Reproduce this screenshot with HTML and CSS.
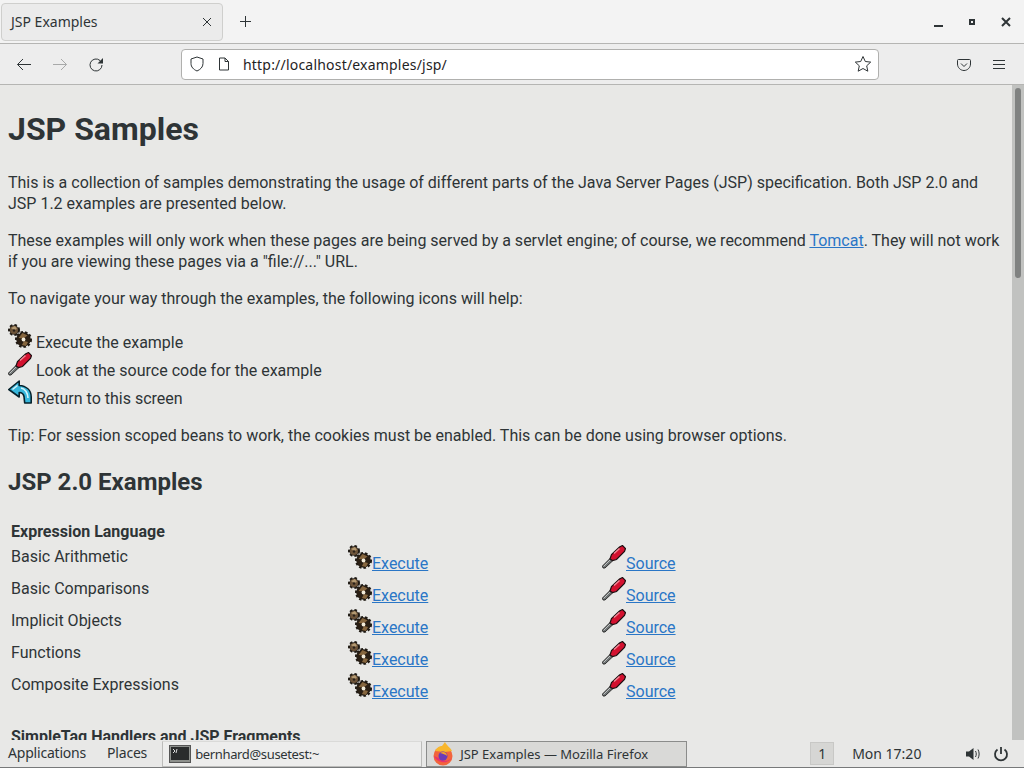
FILE: index.html
```html
<!DOCTYPE html>
<html lang="en">

<head>
    <meta charset="UTF-8">
    <title>JSP Examples</title>
    <link rel="stylesheet" href="styles.css">
</head>

<body>
    <svg class="icon-defs" width="0" height="0" aria-hidden="true">
        <defs>
            <symbol id="gears" viewBox="0 0 24 24">
                <g fill="#1f1a14" stroke="#1f1a14" stroke-width="2.600" stroke-dasharray="2.400 2">
                    <circle cx="6" cy="6" r="4.700"/>
                    <circle cx="15.500" cy="15.500" r="7.200"/>
                </g>
                <circle cx="6" cy="6" r="4" fill="#6d5439"/>
                <path d="M3 4l4-2 2 3-3 1z" fill="#b49a72"/>
                <circle cx="6" cy="6.500" r="1.200" fill="#2a2118"/>
                <circle cx="15.500" cy="15.500" r="6.800" fill="#2a1f14"/>
                <path d="M10.500 14l4-5 5 2.500-4 3zM14 21l2-4 4 1-2 4z" fill="#86663e"/>
                <circle cx="15.500" cy="15.500" r="1.900" fill="#f3ecda"/>
            </symbol>
            <symbol id="driver" viewBox="0 0 24 24">
                <path d="M1 23l-.5-2 8.500-8.500 2.500 2.500-8.500 8z" fill="#6f7474" stroke="#222" stroke-width=".9"/>
                <path d="M1.500 21.500l7-7" stroke="#c9cccc" stroke-width=".9" fill="none"/>
                <path d="M8 14l1.500-4.500 8-7.500 3-1.500 3 3-1 3-8 8-4 1z" fill="#d3112f" stroke="#1c1012" stroke-width="1.200"/>
                <path d="M12 8.500l5.500-5" stroke="#f58a98" stroke-width="1.400" fill="none"/>
            </symbol>
            <symbol id="back" viewBox="0 0 24 24">
                <path d="M.8 9.500l10.400-8.500v4.500c7 .5 12 4.500 12 11.500v6h-6.500l-.7-6.500c-.5-2.500-2.500-4-4.800-4v4.500z" fill="#37b7dc" stroke="#06222c" stroke-width="1.600" stroke-linejoin="round"/>
                <path d="M4.500 9.500l5-4M13 8c4 1 6.500 4 7 10" stroke="#d4f3fb" stroke-width="1.600" fill="none"/>
            </symbol>
        </defs>
    </svg>

    <header class="browser">
        <div class="tabbar">
            <div class="tab">
                <span class="tab-title">JSP Examples</span>
                <svg class="tab-close" width="10" height="10" viewBox="0 0 10 10"><path d="M1 1l8 8M9 1l-8 8"/></svg>
            </div>
            <svg class="new-tab" width="12" height="12" viewBox="0 0 12 12"><path d="M5.500 0v11M0 5.500h11"/></svg>
            <div class="window-buttons">
                <span class="win-min"></span>
                <span class="win-max"></span>
                <svg class="win-close" width="10" height="10" viewBox="0 0 10 10"><path d="M1 1l8 8M9 1l-8 8"/></svg>
            </div>
        </div>
        <div class="navbar">
            <svg class="nav-icon" width="16" height="16" viewBox="0 0 16 16"><path d="M15 7.500H1.500M7 2L1.500 7.500 7 13"/></svg>
            <svg class="nav-icon nav-off" width="16" height="16" viewBox="0 0 16 16"><path d="M1 7.500h13.500M9 2l5.500 5.500L9 13"/></svg>
            <svg class="nav-icon" width="16" height="16" viewBox="0 0 16 16"><path d="M14 8a6 6 0 1 1-2-4.500L14 5.500"/><path class="solid" d="M15 1v5.500H9.500z"/></svg>
            <div class="urlbar">
                <svg class="url-icon" width="16" height="16" viewBox="0 0 16 16"><path d="M8 1l6 2v4.500c0 3.500-2.500 6-6 7.500-3.500-1.500-6-4-6-7.500V3z"/></svg>
                <svg class="url-icon" width="14" height="16" viewBox="0 0 14 16"><path d="M2.500 2h5.500l3.500 3.500v8.500h-9zM8 2v3.500h3.500"/></svg>
                <span class="url-text">http://localhost/examples/jsp/</span>
                <svg class="url-star" width="18" height="18" viewBox="0 0 18 18"><path d="M9 1.500l2.300 5 5.400.6-4 3.700 1.100 5.400L9 13.500l-4.800 2.700 1.100-5.400-4-3.700 5.400-.6z"/></svg>
            </div>
            <svg class="nav-icon pocket" width="16" height="16" viewBox="0 0 16 16"><path d="M2.500 2.500h11a1 1 0 0 1 1 1v3.500c0 3.500-3 6.500-6.500 6.500s-6.500-3-6.500-6.500V3.500a1 1 0 0 1 1-1zM5 6.500l3 3 3-3"/></svg>
            <svg class="nav-icon menu" width="14" height="12" viewBox="0 0 14 12"><path d="M1 1.500h12M1 5.500h12M1 9.500h12"/></svg>
        </div>
    </header>

    <div class="viewport">
        <main class="page">
            <h1>JSP Samples</h1>
            <p>This is a collection of samples demonstrating the usage of different parts of the Java Server Pages (JSP) specification. Both JSP 2.0 and JSP 1.2 examples are presented below.</p>
            <p>These examples will only work when these pages are being served by a servlet engine; of course, we recommend <a href="#">Tomcat</a>. They will not work if you are viewing these pages via a "file://..." URL.</p>
            <p>To navigate your way through the examples, the following icons will help:</p>
            <div class="legend">
                <div><svg class="pic"><use href="#gears"/></svg> Execute the example</div>
                <div><svg class="pic"><use href="#driver"/></svg> Look at the source code for the example</div>
                <div><svg class="pic"><use href="#back"/></svg> Return to this screen</div>
            </div>
            <p>Tip: For session scoped beans to work, the cookies must be enabled. This can be done using browser options.</p>
            <h2>JSP 2.0 Examples</h2>
            <table class="samples">
                <colgroup>
                    <col class="col-name">
                    <col class="col-execute">
                    <col class="col-source">
                </colgroup>
                <tr><th colspan="3">Expression Language</th></tr>
                <tr>
                    <td>Basic Arithmetic</td>
                    <td><svg class="pic"><use href="#gears"/></svg><a href="#">Execute</a></td>
                    <td><svg class="pic"><use href="#driver"/></svg><a href="#">Source</a></td>
                </tr>
                <tr>
                    <td>Basic Comparisons</td>
                    <td><svg class="pic"><use href="#gears"/></svg><a href="#">Execute</a></td>
                    <td><svg class="pic"><use href="#driver"/></svg><a href="#">Source</a></td>
                </tr>
                <tr>
                    <td>Implicit Objects</td>
                    <td><svg class="pic"><use href="#gears"/></svg><a href="#">Execute</a></td>
                    <td><svg class="pic"><use href="#driver"/></svg><a href="#">Source</a></td>
                </tr>
                <tr>
                    <td>Functions</td>
                    <td><svg class="pic"><use href="#gears"/></svg><a href="#">Execute</a></td>
                    <td><svg class="pic"><use href="#driver"/></svg><a href="#">Source</a></td>
                </tr>
                <tr>
                    <td>Composite Expressions</td>
                    <td><svg class="pic"><use href="#gears"/></svg><a href="#">Execute</a></td>
                    <td><svg class="pic"><use href="#driver"/></svg><a href="#">Source</a></td>
                </tr>
                <tr><td class="spacer" colspan="3"></td></tr>
                <tr><th colspan="3">SimpleTag Handlers and JSP Fragments</th></tr>
            </table>
        </main>
        <div class="scrollbar"><div class="scroll-thumb"></div></div>
    </div>

    <footer class="taskbar">
        <span class="menu-item">Applications</span>
        <span class="menu-item">Places</span>
        <div class="task task-term">
            <svg width="22" height="18" viewBox="0 0 22 18"><rect x="0.500" y="0.500" width="21" height="17" fill="#8d908c" stroke="#555"/><rect x="2" y="2" width="18" height="13" fill="#2a2c2c"/><path d="M4 4l2 2-2 2M8 4l-1 4" stroke="#ddd" fill="none"/></svg>
            <span>bernhard@susetest:~</span>
        </div>
        <div class="task task-fox">
            <svg width="22" height="24" viewBox="0 0 22 24">
                <circle cx="11" cy="14" r="9.500" fill="#f2643c"/>
                <path d="M3 9c2-4 5-5 7-5l3-4c1 3 5 5 7 9l-7 1z" fill="#f8b62c"/>
                <path d="M2 14c2 6 14 10 18 1-3 5-8 4-11 2z" fill="#e8336d"/>
                <circle cx="11" cy="14" r="4.500" fill="#6a3bb8"/>
                <path d="M8 11c3-2 7-1 7 3-2-2-4-2-7-3z" fill="#f4a12c"/>
            </svg>
            <span>JSP Examples — Mozilla Firefox</span>
        </div>
        <span class="workspace">1</span>
        <span class="clock">Mon 17:20</span>
        <svg class="tray" width="16" height="16" viewBox="0 0 16 16"><path class="fill" d="M1 5.500h3L8.500 2v12L4 10.500H1z"/><path d="M10.500 5c1 2 1 4 0 6M13 3.500c1.500 3 1.500 6 0 9"/></svg>
        <svg class="tray power" width="16" height="16" viewBox="0 0 16 16"><path d="M8 1v7M4.500 3.500a6 6 0 1 0 7 0"/></svg>
    </footer>
</body>

</html>
```
FILE: styles.css
```css
/* Variables */
:root {
    --chrome-color: #2e3436;
    --page-background: #e8e8e6;
    --toolbar-background: #ededed;
    --border-color: #b5b5b3;
    --link-color: #2a76c6;
}

/* Global Styles */
html,
body {
    height: 100%;
    margin: 0;
    overflow: hidden;
}

body {
    display: flex;
    flex-direction: column;
    width: 1024px;
    height: 768px;
    color: var(--chrome-color);
    font-family: "Noto Sans", sans-serif;
}

.icon-defs {
    position: absolute;
}

.browser svg path,
.tray path {
    fill: none;
    stroke: currentColor;
}

/* Browser chrome */
.browser {
    flex: none;
}

.tabbar {
    display: flex;
    align-items: center;
    height: 43px;
    background: #f3f3f3;
    border-bottom: 1px solid var(--border-color);
}

.tab {
    display: flex;
    align-items: center;
    justify-content: space-between;
    box-sizing: border-box;
    width: 222px;
    height: 38px;
    margin-left: 1px;
    padding: 0 6px 0 9px;
    background: #ebebeb;
    border: 1px solid #cfcfcd;
    border-radius: 4px;
    font-size: 14px;
}

.tab-close {
    margin-right: 4px;
}

.new-tab {
    margin-left: 17px;
}

.window-buttons {
    display: flex;
    align-items: center;
    gap: 26px;
    margin-left: auto;
    margin-right: 13px;
}

.win-min {
    width: 9px;
    height: 2px;
    margin-top: 8px;
    background: var(--chrome-color);
}

.win-max {
    box-sizing: border-box;
    width: 6px;
    height: 6px;
    border: 2px solid var(--chrome-color);
}

.win-close path {
    stroke-width: 2;
}

.navbar {
    display: flex;
    align-items: center;
    height: 40px;
    background: var(--toolbar-background);
    border-bottom: 1px solid var(--border-color);
    padding-left: 16px;
    gap: 20px;
}

.nav-icon {
    margin-top: 1px;
}

.nav-off {
    color: #a8a9a9;
}

.browser svg path.solid {
    fill: currentColor;
    stroke: none;
}

.tray path.fill {
    fill: currentColor;
    stroke: none;
}

.urlbar {
    display: flex;
    align-items: center;
    box-sizing: border-box;
    width: 698px;
    height: 31px;
    margin-left: 57px;
    padding: 0 6px 0 7px;
    background: #fff;
    border: 1px solid #b0b0ae;
    border-radius: 4px;
    font-size: 14px;
}

.url-icon {
    margin-right: 12px;
}

.url-icon + .url-icon {
    margin-right: 6px;
}

.url-text {
    margin-left: 6px;
    color: #1f2324;
    letter-spacing: 0.2px;
}

.url-star {
    margin-left: auto;
}

.pocket {
    margin-left: 57px;
}

/* Page */
.viewport {
    flex: 1;
    display: flex;
    min-height: 0;
    background: var(--page-background);
}

.page {
    flex: 1;
    min-width: 0;
    padding: 8px;
    overflow: hidden;
    font-family: Roboto, sans-serif;
    font-size: 16px;
    line-height: 21px;
    color: var(--chrome-color);
}

h1 {
    margin: 20px 0 27px;
    font-size: 32px;
    line-height: 32px;
    font-weight: 700;
}

h2 {
    margin: 20px 0 21px;
    font-size: 24px;
    line-height: 32px;
    font-weight: 700;
}

p {
    margin: 16px 0;
}

a {
    color: var(--link-color);
}

.pic {
    width: 24px;
    height: 24px;
}

.legend {
    margin-top: -1px;
    margin-bottom: 17px;
}

.legend div {
    height: 28px;
    line-height: 20px;
}

.samples {
    table-layout: fixed;
    width: 800px;
    border-spacing: 2px;
    font-size: 16px;
}

.col-name {
    width: 335px;
}

.col-execute {
    width: 252px;
}

.samples td,
.samples th {
    padding: 1px;
    text-align: left;
    line-height: 19px;
}

.samples td {
    height: 28px;
}

.samples td:first-child {
    height: 26px;
    vertical-align: top;
    padding-top: 3px;
}

.samples td.spacer {
    height: 18px;
    padding: 1px;
}

.scrollbar {
    flex: none;
    width: 12px;
    background: #c1c2c0;
    box-sizing: border-box;
    padding: 3px 3px 0;
}

.scroll-thumb {
    height: 190px;
    background: #808281;
    border-radius: 3px;
}

/* Desktop panel */
.taskbar {
    flex: none;
    display: flex;
    align-items: center;
    box-sizing: border-box;
    height: 28px;
    background: #e8e8e7;
    border-bottom: 1px solid #77797a;
    font-size: 14px;
}

.menu-item {
    margin-left: 8px;
    margin-right: 13px;
    margin-bottom: 2px;
    letter-spacing: -0.2px;
}

.task {
    display: flex;
    align-items: center;
    box-sizing: border-box;
    height: 26px;
    background: #ededec;
    border: 1px solid #bcbcba;
    border-top-color: #dadad8;
    font-size: 13px;
    gap: 5px;
}

.task-term {
    width: 260px;
    margin-left: 2px;
    padding-left: 6px;
    gap: 4px;
    letter-spacing: -0.35px;
}

.task-fox {
    width: 261px;
    margin-left: 4px;
    padding-left: 5px;
    gap: 6px;
    background: #d9d9d7;
    border-color: #8b8c8b;
}

.workspace {
    margin-left: 123px;
    padding: 0 7px;
    line-height: 21px;
    background: #d6d6d4;
    border: 1px solid #c8c8c6;
}

.clock {
    margin-left: 18px;
    margin-right: 44px;
}

.tray {
    margin-right: 12px;
}

.power path {
    stroke-width: 1.800;
}
```
